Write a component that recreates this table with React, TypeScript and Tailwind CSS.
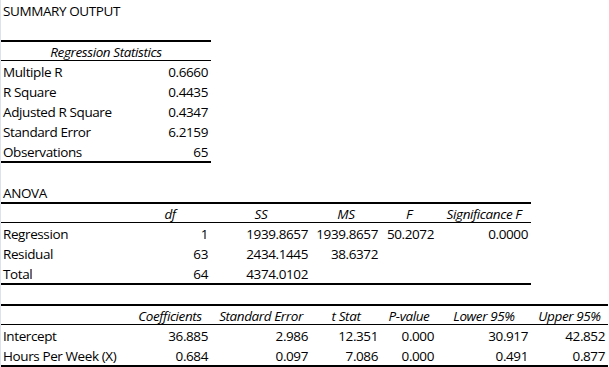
import React from 'react';

type Align = 'left' | 'right' | 'center';

interface CellProps {
  w: string;
  align?: Align;
  italic?: boolean;
  children?: React.ReactNode;
}

const Cell: React.FC<CellProps> = ({ w, align = 'right', italic = false, children }) => (
  <div
    className={`${w} shrink-0 whitespace-nowrap overflow-visible ${
      align === 'left' ? 'text-left pl-[2px]' : align === 'center' ? 'text-center' : 'text-right pr-[3px]'
    } ${italic ? 'italic' : ''}`}
  >
    {children}
  </div>
);

// column widths, like the sheet's columns A..G
const A = 'w-[128px]';
const B = 'w-[82px]';
const C = 'w-[100px]';
const D = 'w-[70px]';
const E = 'w-[56px]';
const F = 'w-[94px]';
const G = 'w-[77px]';

const summaryRows = [
  ['Multiple R', '0.6660'],
  ['R Square', '0.4435'],
  ['Adjusted R Square', '0.4347'],
  ['Standard Error', '6.2159'],
  ['Observations', '65'],
];

const anovaRows = [
  ['Regression', '1', '1939.8657', '1939.8657', '50.2072', '0.0000'],
  ['Residual', '63', '2434.1445', '38.6372', '', ''],
  ['Total', '64', '4374.0102', '', '', ''],
];

const coefRows = [
  ['Intercept', '36.885', '2.986', '12.351', '0.000', '30.917', '42.852'],
  ['Hours Per Week (X)', '0.684', '0.097', '7.086', '0.000', '0.491', '0.877'],
];

const row = 'flex h-[20px] leading-[18px] pt-[2px]';

export default function App() {
  return (
    <div className="flex w-[609px] h-[367px] overflow-hidden bg-white text-black font-['Open_Sans',sans-serif] font-medium text-[13.5px] tracking-[-0.4px]">
      <div className="w-px shrink-0 bg-[#dde3ec]" />
      <div className="flex flex-col">
        <div className={row}>
          <Cell w={A} align="left">SUMMARY OUTPUT</Cell>
        </div>
        <div className="h-[20px]" />

        {/* Regression statistics */}
        <div className="w-[210px] border-t-2 border-b-2 border-black">
          <div className="flex h-[19px] leading-[18px] pt-[1px] border-b border-black italic">
            <div className="w-[210px] text-center">Regression Statistics</div>
          </div>
          {summaryRows.map(([label, value]) => (
            <div key={label} className={row}>
              <Cell w={A} align="left">{label}</Cell>
              <Cell w={B}>{value}</Cell>
            </div>
          ))}
        </div>
        <div className="h-[20px]" />

        {/* ANOVA */}
        <div className="flex h-[19px] leading-[18px] pt-[1px]">
          <Cell w={A} align="left">ANOVA</Cell>
        </div>
        <div className="w-[530px] border-t-2 border-b-2 border-black">
          <div className="flex h-[19px] leading-[18px] pt-[1px] border-b border-black">
            <Cell w={A} align="left" />
            <Cell w={B} align="center" italic>df</Cell>
            <Cell w={C} align="center" italic>SS</Cell>
            <Cell w={D} align="center" italic>MS</Cell>
            <Cell w={E} align="center" italic>F</Cell>
            <Cell w={F} align="center" italic>Significance F</Cell>
          </div>
          {anovaRows.map((r) => (
            <div key={r[0]} className={row}>
              <Cell w={A} align="left">{r[0]}</Cell>
              <Cell w={B}>{r[1]}</Cell>
              <Cell w={C}>{r[2]}</Cell>
              <Cell w={D}>{r[3]}</Cell>
              <Cell w={E}>{r[4]}</Cell>
              <Cell w={F}>{r[5]}</Cell>
            </div>
          ))}
        </div>
        <div className="h-[19px]" />

        {/* Coefficients */}
        <div className="w-[607px] border-t-2 border-b-2 border-black">
          <div className="flex h-[19px] leading-[18px] pt-[1px] border-b border-black">
            <Cell w={A} align="left" />
            <Cell w={B} align="center" italic>Coefficients</Cell>
            <Cell w={C} align="center" italic>Standard Error</Cell>
            <Cell w={D} align="center" italic>t Stat</Cell>
            <Cell w={E} align="center" italic>P-value</Cell>
            <Cell w={F} align="center" italic>Lower 95%</Cell>
            <Cell w={G} align="center" italic>Upper 95%</Cell>
          </div>
          {coefRows.map((r) => (
            <div key={r[0]} className={row}>
              <Cell w={A} align="left">{r[0]}</Cell>
              <Cell w={B}>{r[1]}</Cell>
              <Cell w={C}>{r[2]}</Cell>
              <Cell w={D}>{r[3]}</Cell>
              <Cell w={E}>{r[4]}</Cell>
              <Cell w={F}>{r[5]}</Cell>
              <Cell w={G}>{r[6]}</Cell>
            </div>
          ))}
        </div>
      </div>
    </div>
  );
}
